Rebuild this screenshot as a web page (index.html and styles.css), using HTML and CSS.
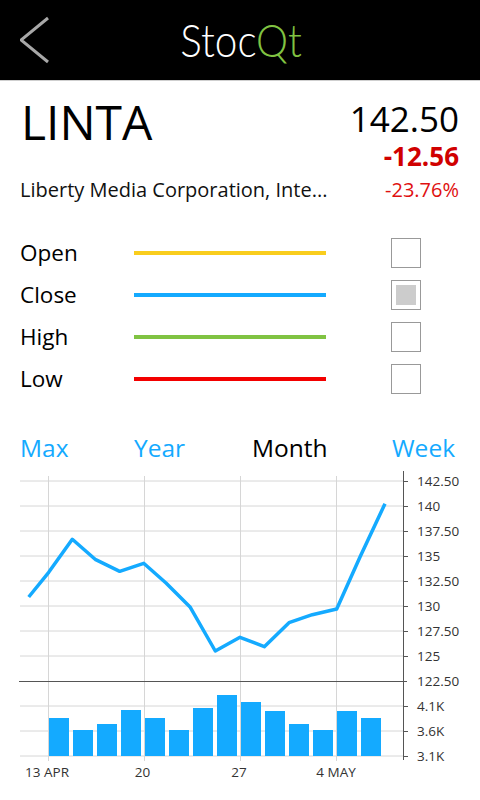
FILE: index.html
```html
<!DOCTYPE html>
<html lang="en">
  <head>
    <meta charset="UTF-8" />
    <meta name="viewport" content="width=device-width, initial-scale=1.0" />
    <title>StocQt</title>
    <link rel="stylesheet" href="styles.css">
  </head>
  <body>
    <div class="header">
      <svg class="back" width="40" height="60" viewBox="0 0 40 60">
        <polyline points="28,18 1,40 28,62" transform="translate(0,-10)" />
      </svg>
      <div class="title">Stoc<span class="qt">Qt</span></div>
    </div>

    <div class="info">
      <div class="info-top">
        <div class="symbol">LINTA</div>
        <div class="prices">
          <div class="price">142.50</div>
          <div class="change">-12.56</div>
        </div>
      </div>
      <div class="info-bottom">
        <div class="name">Liberty Media Corporation, Inte...</div>
        <div class="percent">-23.76%</div>
      </div>
    </div>

    <div class="legend">
      <div class="legend-row">
        <span class="legend-label">Open</span>
        <span class="legend-line open"></span>
        <span class="check"></span>
      </div>
      <div class="legend-row">
        <span class="legend-label">Close</span>
        <span class="legend-line close"></span>
        <span class="check checked"></span>
      </div>
      <div class="legend-row">
        <span class="legend-label">High</span>
        <span class="legend-line high"></span>
        <span class="check"></span>
      </div>
      <div class="legend-row">
        <span class="legend-label">Low</span>
        <span class="legend-line low"></span>
        <span class="check"></span>
      </div>
    </div>

    <div class="tabs">
      <span class="tab">Max</span>
      <span class="tab">Year</span>
      <span class="tab active">Month</span>
      <span class="tab">Week</span>
    </div>

    <svg class="chart" width="480" height="320" viewBox="0 470 480 320">
      <!-- grid -->
      <g class="grid">
        <line x1="20" y1="482" x2="403" y2="482" />
        <line x1="20" y1="507" x2="403" y2="507" />
        <line x1="20" y1="532" x2="403" y2="532" />
        <line x1="20" y1="557" x2="403" y2="557" />
        <line x1="20" y1="582" x2="403" y2="582" />
        <line x1="20" y1="607" x2="403" y2="607" />
        <line x1="20" y1="632" x2="403" y2="632" />
        <line x1="20" y1="657" x2="403" y2="657" />
        <line x1="20" y1="707" x2="403" y2="707" />
        <line x1="20" y1="732" x2="403" y2="732" />
        <line x1="20" y1="757" x2="403" y2="757" />
        <line x1="48.5" y1="477" x2="48.5" y2="762" />
        <line x1="144.5" y1="477" x2="144.5" y2="762" />
        <line x1="240.5" y1="477" x2="240.5" y2="762" />
        <line x1="336.5" y1="477" x2="336.5" y2="762" />
      </g>

      <!-- volume -->
      <g class="bars">
        <rect x="49" y="719" width="20" height="38" />
        <rect x="73" y="731" width="20" height="26" />
        <rect x="97" y="725" width="20" height="32" />
        <rect x="121" y="711" width="20" height="46" />
        <rect x="145" y="719" width="20" height="38" />
        <rect x="169" y="731" width="20" height="26" />
        <rect x="193" y="709" width="20" height="48" />
        <rect x="217" y="696" width="20" height="61" />
        <rect x="241" y="703" width="20" height="54" />
        <rect x="265" y="712" width="20" height="45" />
        <rect x="289" y="725" width="20" height="32" />
        <rect x="313" y="731" width="20" height="26" />
        <rect x="337" y="712" width="20" height="45" />
        <rect x="361" y="719" width="20" height="38" />
      </g>

      <!-- axis -->
      <g class="axis">
        <line x1="19" y1="682.5" x2="407" y2="682.5" />
        <line x1="403.5" y1="472" x2="403.5" y2="761" />
        <line x1="403" y1="482.5" x2="408" y2="482.5" />
        <line x1="403" y1="507.5" x2="408" y2="507.5" />
        <line x1="403" y1="532.5" x2="408" y2="532.5" />
        <line x1="403" y1="557.5" x2="408" y2="557.5" />
        <line x1="403" y1="582.5" x2="408" y2="582.5" />
        <line x1="403" y1="607.5" x2="408" y2="607.5" />
        <line x1="403" y1="632.5" x2="408" y2="632.5" />
        <line x1="403" y1="657.5" x2="408" y2="657.5" />
        <line x1="403" y1="707.5" x2="408" y2="707.5" />
        <line x1="403" y1="732.5" x2="408" y2="732.5" />
        <line x1="403" y1="757.5" x2="408" y2="757.5" />
      </g>

      <polyline class="price-line" points="28.7,598 48.7,573.3 72.3,540.3 95.7,560.7 119.7,572.3 143.7,564.3 166,584 190.3,608.3 215.3,652 240,638.3 264.3,647.7 289,623.7 312.3,615.7 336.7,610 360,558 385,504.7" />

      <g class="y-labels">
        <text x="417" y="487">142.50</text>
        <text x="417" y="512">140</text>
        <text x="417" y="537">137.50</text>
        <text x="417" y="562">135</text>
        <text x="417" y="587">132.50</text>
        <text x="417" y="612">130</text>
        <text x="417" y="637">127.50</text>
        <text x="417" y="662">125</text>
        <text x="417" y="687">122.50</text>
        <text x="417" y="712">4.1K</text>
        <text x="417" y="737">3.6K</text>
        <text x="417" y="762">3.1K</text>
      </g>

      <g class="x-labels">
        <text x="47" y="778">13 APR</text>
        <text x="142.5" y="778">20</text>
        <text x="239" y="778">27</text>
        <text x="336" y="778">4 MAY</text>
      </g>
    </svg>
  </body>
</html>
```

FILE: styles.css
```css
body {
  margin: 0;
  font-family: "Open Sans", "DejaVu Sans", sans-serif;
  background-color: white;
  color: black;
  width: 480px;
  height: 800px;
  overflow: hidden;
}

.header {
  height: 80px;
  background-color: black;
  border-bottom: 1px solid #cfcfcf;
  display: flex;
  align-items: center;
  justify-content: center;
  position: relative;
}

.back {
  position: absolute;
  left: 20px;
  top: 10px;
}

.back polyline {
  fill: none;
  stroke: #a8a8a8;
  stroke-width: 3;
}

.title {
  font-family: "Lato", sans-serif;
  font-weight: 300;
  font-size: 46px;
  color: white;
  line-height: 50px;
  transform: scaleX(0.88);
  margin-left: 2px;
}

.qt {
  color: #80c342;
}

.info {
  padding: 16px 21px 0 20px;
}

.info-top {
  display: flex;
  justify-content: space-between;
  align-items: flex-start;
}

.symbol {
  font-size: 48px;
  line-height: 50px;
  margin-left: 1px;
}

.prices {
  text-align: right;
}

.price {
  font-size: 35px;
  line-height: 44px;
}

.change {
  font-size: 26px;
  font-weight: bold;
  line-height: 30px;
  color: #d00000;
}

.info-bottom {
  display: flex;
  justify-content: space-between;
  margin-top: 6px;
  font-size: 20px;
  line-height: 26px;
}

.name {
  color: #111;
}

.percent {
  color: #e01010;
}

.legend {
  margin-top: 29px;
  padding-left: 20px;
}

.legend-row {
  display: flex;
  align-items: center;
  height: 42px;
}

.legend-label {
  width: 114px;
  font-size: 22.5px;
  line-height: 42px;
}

.legend-line {
  width: 192px;
  height: 4px;
}

.legend-line.open {
  background-color: #f9cd1d;
}

.legend-line.close {
  background-color: #14aaff;
}

.legend-line.high {
  background-color: #80c342;
}

.legend-line.low {
  background-color: #f30000;
}

.check {
  box-sizing: border-box;
  width: 30px;
  height: 30px;
  margin-left: 65px;
  border: 1px solid #999;
  background-color: white;
  display: flex;
  align-items: center;
  justify-content: center;
}

.check.checked::after {
  content: "";
  width: 20px;
  height: 20px;
  background-color: #cccccc;
}

.tabs {
  display: grid;
  grid-template-columns: 114px 118px 140px auto;
  margin-top: 33px;
  padding-left: 20px;
  font-size: 24.5px;
  line-height: 30px;
}

.tab {
  color: #14aaff;
}

.tab.active {
  color: black;
}

.chart {
  display: block;
  margin-top: 6px;
}

.grid line {
  stroke: #d6d6d6;
  stroke-width: 1;
}

.axis line {
  stroke: #555;
  stroke-width: 1;
}

.bars rect {
  fill: #14aaff;
}

.price-line {
  fill: none;
  stroke: #14aaff;
  stroke-width: 3.5;
  stroke-linejoin: round;
}

.y-labels text,
.x-labels text {
  font-family: "Open Sans", sans-serif;
  font-size: 13.5px;
  fill: #333;
}

.x-labels text {
  text-anchor: middle;
}
```
